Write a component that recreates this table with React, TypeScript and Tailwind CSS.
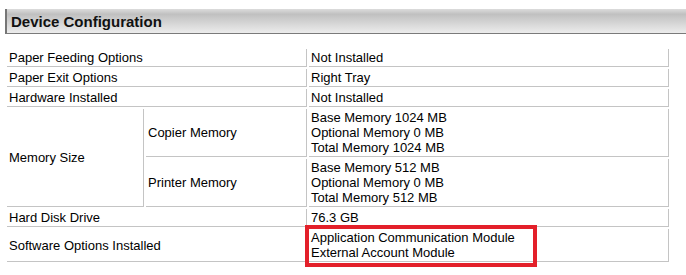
import React from "react";

const cell = "border-r border-b border-[#c4c4c4] px-[2px] py-px align-middle";

export default function App() {
  return (
    <div className="w-[686px] h-[275px] bg-white text-black font-['Liberation_Sans',Arial,sans-serif] text-[13px] leading-[15px] pt-[9px] overflow-hidden">
      <div className="ml-[5px] h-[25px] border-l-[2px] border-l-[#767676] border-b border-b-[#7a7a7a] bg-[linear-gradient(to_bottom,#dcdcdc_0%,#c0c0c0_22%,#d6d6d6_60%,#ececec_100%)] flex items-center pl-[4px]">
        <span className="font-bold text-[15px] leading-[17px] text-[#111]">Device Configuration</span>
      </div>
      <table className="mt-[13px] ml-[5px] w-[666px] table-fixed border-separate border-spacing-[2px]">
        <colgroup>
          <col className="w-[137px]" />
          <col className="w-[161px]" />
          <col />
        </colgroup>
        <tbody>
          <tr>
            <td colSpan={2} className={cell}>Paper Feeding Options</td>
            <td className={cell}>Not Installed</td>
          </tr>
          <tr>
            <td colSpan={2} className={cell}>Paper Exit Options</td>
            <td className={cell}>Right Tray</td>
          </tr>
          <tr>
            <td colSpan={2} className={cell}>Hardware Installed</td>
            <td className={cell}>Not Installed</td>
          </tr>
          <tr>
            <td rowSpan={2} className={cell}>Memory Size</td>
            <td className={cell}>Copier Memory</td>
            <td className={cell}>
              <div>Base Memory 1024 MB</div>
              <div>Optional Memory 0 MB</div>
              <div>Total Memory 1024 MB</div>
            </td>
          </tr>
          <tr>
            <td className={cell}>Printer Memory</td>
            <td className={cell}>
              <div>Base Memory 512 MB</div>
              <div>Optional Memory 0 MB</div>
              <div>Total Memory 512 MB</div>
            </td>
          </tr>
          <tr>
            <td colSpan={2} className={cell}>Hard Disk Drive</td>
            <td className={cell}>76.3 GB</td>
          </tr>
          <tr>
            <td colSpan={2} className={cell}>Software Options Installed</td>
            <td className={cell + " relative"}>
              <div>Application Communication Module</div>
              <div>External Account Module</div>
              <div className="absolute left-[-4px] top-[-4px] w-[232px] h-[42px] border-[4px] border-[#e3202a]" />
            </td>
          </tr>
        </tbody>
      </table>
    </div>
  );
}
